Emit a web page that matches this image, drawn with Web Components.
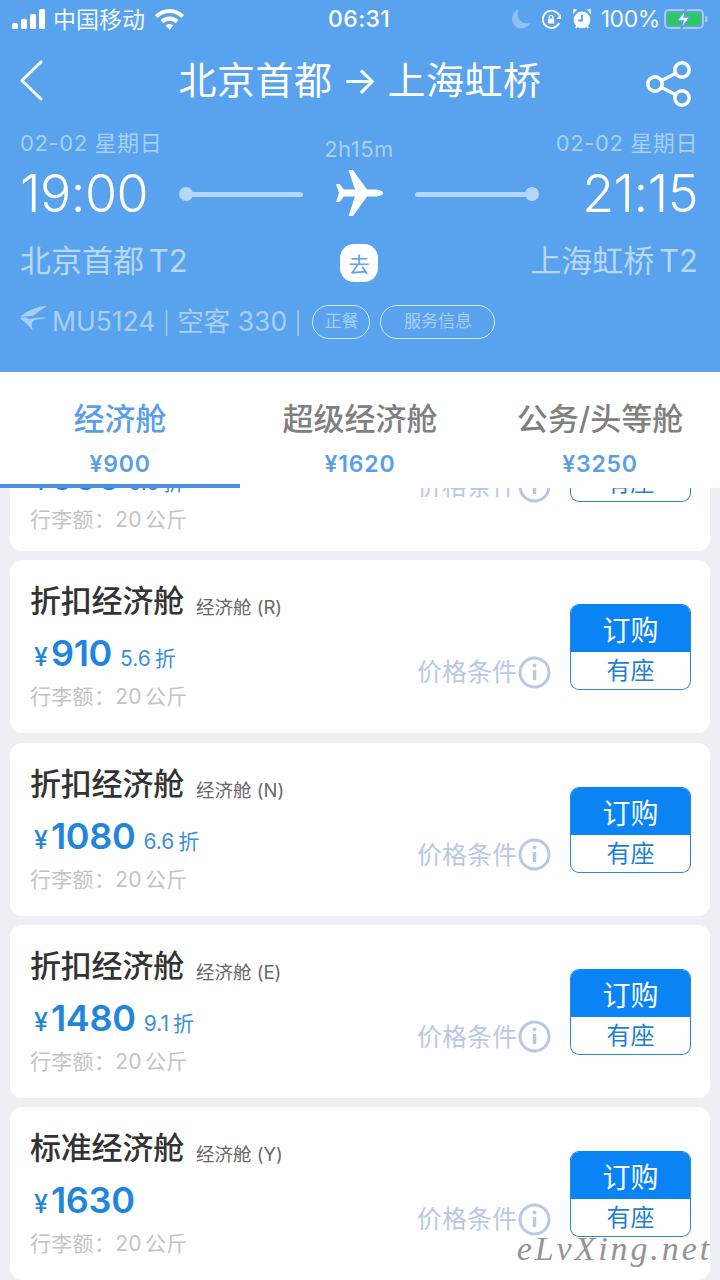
<!DOCTYPE html>
<html lang="zh">
<head>
<meta charset="utf-8">
<title>航班详情</title>
<style>
    html, body { margin: 0; padding: 0; background: #eeeef5; }
    body { font-family: Inter, "Noto Sans CJK SC", sans-serif; }
</style>
</head>
<body>
<flight-page>
    <status-bar slot="status"></status-bar>
    <flight-header slot="header"></flight-header>
    <cabin-tabs slot="tabs">
        <cabin-tab active label="经济舱" price="¥900"></cabin-tab>
        <cabin-tab label="超级经济舱" price="¥1620"></cabin-tab>
        <cabin-tab label="公务/头等舱" price="¥3250"></cabin-tab>
    </cabin-tabs>
    <fare-card class="scrolled" name="折扣经济舱" cabin="经济舱 (R)" price="900" discount="5.5 折"></fare-card>
    <fare-card name="折扣经济舱" cabin="经济舱 (R)" price="910" discount="5.6 折"></fare-card>
    <fare-card name="折扣经济舱" cabin="经济舱 (N)" price="1080" discount="6.6 折"></fare-card>
    <fare-card name="折扣经济舱" cabin="经济舱 (E)" price="1480" discount="9.1 折"></fare-card>
    <fare-card name="标准经济舱" cabin="经济舱 (Y)" price="1630"></fare-card>
</flight-page>

<script>
class FlightPage extends HTMLElement {
    constructor() {
        super();
        this.attachShadow({ mode: 'open' });
        this.shadowRoot.innerHTML = `
            <style>
                :host {
                    display: flex;
                    flex-direction: column;
                    position: relative;
                    width: 720px;
                    height: 1280px;
                    overflow: hidden;
                    background: #eeeef5;
                }
                #top {
                    background: #58a2ee;
                    height: 372px;
                    flex: none;
                }
                #list {
                    flex: 1;
                    min-height: 0;
                    overflow: hidden;
                    display: flex;
                    flex-direction: column;
                    gap: 9.3px;
                    padding: 0 10px;
                }
                #mark {
                    position: absolute;
                    right: 8px;
                    bottom: 12px;
                    font: italic 34px "Liberation Serif", serif;
                    letter-spacing: 2.900px;
                    color: #949494;
                }
            </style>
            <div id="top">
                <slot name="status"></slot>
                <slot name="header"></slot>
            </div>
            <slot name="tabs"></slot>
            <div id="list"><slot></slot></div>
            <div id="mark">eLvXing.net</div>
        `;
    }
}

class StatusBar extends HTMLElement {
    constructor() {
        super();
        this.attachShadow({ mode: 'open' });
        this.shadowRoot.innerHTML = `
            <style>
                :host {
                    display: flex;
                    align-items: center;
                    height: 38px;
                    padding: 0 12px 0 12px;
                    color: #fff;
                    font-family: Inter, "Noto Sans CJK SC", sans-serif;
                    position: relative;
                }
                svg { display: block; flex: none; }
                #carrier { font-size: 23px; margin: 0 0 3px 8px; opacity: .92; }
                #wifi { margin-left: 10px; }
                #time {
                    position: absolute;
                    left: 328px;
                    font-size: 23px;
                    font-weight: 500;
                    letter-spacing: .4px;
                }
                #right { margin-left: auto; display: flex; align-items: center; }
                #pct { font-size: 23px; margin: 0 4px 0 9px; letter-spacing: -.4px; opacity: .95; }
            </style>
            <svg width="33" height="20" viewBox="0 0 33 20" fill="#fff">
                <rect x="0" y="14" width="6" height="6" rx="1.500"/>
                <rect x="9" y="10" width="6" height="10" rx="1.500"/>
                <rect x="18" y="5" width="6" height="15" rx="1.500"/>
                <rect x="27" y="0" width="6" height="20" rx="1.500"/>
            </svg>
            <span id="carrier">中国移动</span>
            <svg id="wifi" width="29" height="21" viewBox="0 0 29 21" fill="#fff">
                <path d="M14.500 0C9 0 4 2.200 0 6l2.700 3C5.900 5.900 10 4.100 14.500 4.100S23.100 5.900 26.300 9L29 6C25 2.200 20 0 14.500 0z"/>
                <path d="M14.500 7.600c-3.400 0-6.500 1.300-8.900 3.600l2.800 3c1.600-1.500 3.700-2.400 6.100-2.400s4.500.9 6.100 2.400l2.800-3c-2.400-2.300-5.500-3.600-8.900-3.600z"/>
                <path d="M14.500 15c-1.500 0-2.800.6-3.800 1.500l3.800 4.500 3.800-4.500c-1-.9-2.300-1.500-3.800-1.500z"/>
            </svg>
            <span id="time">06:31</span>
            <div id="right">
                <svg width="18" height="20" viewBox="0 0 19 20" fill="#8fc0f4">
                    <path d="M7 0C2.800 1.200 0 5 0 9.500 0 15.300 4.500 20 10 20c3.900 0 7.300-2.400 9-5.800-1 .4-2.200.6-3.400.6C10.400 14.800 6 10.400 6 5c0-1.800.4-3.500 1-5z"/>
                </svg>
                <svg style="margin-left:11px" width="21" height="21" viewBox="0 0 23 23" fill="none" stroke="#fff" stroke-width="2">
                    <path d="M20 15.500A9.500 9.500 0 1 1 20 7"/>
                    <path d="M21.800 5.500v5.500h-5z" fill="#fff" stroke="none"/>
                    <rect x="7.500" y="10.500" width="7" height="5.500" rx="1" fill="#fff" stroke="none"/>
                    <path d="M9 10.500V9a2 2 0 0 1 4 0v1.500" stroke-width="1.500"/>
                </svg>
                <svg style="margin-left:10px" width="20" height="22" viewBox="0 0 21 23">
                    <circle cx="10.500" cy="12.500" r="8.800" fill="#fff"/>
                    <path d="M10.500 7v6H6.500" fill="none" stroke="#58a2ee" stroke-width="2"/>
                    <path d="M1 6.500 5.500 1.500 1.500 1zM20 6.500 15.500 1.500 19.500 1z" fill="#fff"/>
                    <path d="M4 21l2-3M17 21l-2-3" stroke="#fff" stroke-width="2"/>
                </svg>
                <span id="pct">100%</span>
                <svg width="44" height="22" viewBox="0 0 44 22">
                    <rect x="1" y="2" width="38" height="18" rx="4" fill="none" stroke="#a5cbf5" stroke-width="2"/>
                    <rect x="3.500" y="4.500" width="33" height="13" rx="2" fill="#2ec95c"/>
                    <rect x="41" y="8" width="2.500" height="6" rx="1" fill="#a5cbf5"/>
                    <path d="M22 1 13 13h6l-2 8 9-12h-6z" fill="#fff" stroke="#58a2ee" stroke-width="1.500"/>
                </svg>
            </div>
        `;
    }
}

class FlightHeader extends HTMLElement {
    constructor() {
        super();
        this.attachShadow({ mode: 'open' });
        this.shadowRoot.innerHTML = `
            <style>
                :host {
                    display: block;
                    color: #fff;
                    font-family: Inter, "Noto Sans CJK SC", sans-serif;
                }
                svg { display: block; flex: none; }
                #nav {
                    display: grid;
                    grid-template-columns: 1fr auto 1fr;
                    align-items: center;
                    height: 84px;
                    padding: 0 28px;
                }
                #back { margin-left: -10px; }
                #share { justify-self: end; margin-top: 8px; }
                #title {
                    font-size: 38px;
                    line-height: 84px;
                    letter-spacing: .5px;
                    word-spacing: -2px;
                    white-space: nowrap;
                }
                #schedule {
                    display: grid;
                    grid-template-columns: minmax(0, 1fr) 340px minmax(0, 1fr);
                    padding: 6px 22px 0 20px;
                    height: 128px;
                }
                .side { display: flex; flex-direction: column; white-space: nowrap; }
                .side.arr { align-items: flex-end; }
                .date { font-size: 22px; line-height: 30px; color: #a9cff6; letter-spacing: .6px; }
                .clock { font-size: 52px; font-weight: 350; line-height: 68px; margin-top: 2px; letter-spacing: -.5px; }
                .airport { font-size: 31px; line-height: 44px; margin-top: 11px; color: #b9d8f8; white-space: nowrap; word-spacing: -4px; }
                #middle { display: flex; flex-direction: column; align-items: center; }
                #duration { font-size: 22px; line-height: 26px; margin-top: 8px; color: #a9cff6; letter-spacing: .5px; }
                #track { display: flex; align-items: center; gap: 32px; height: 50px; margin-top: 7px; flex: none; }
                #track svg { margin-top: -2px; }
                .line { display: flex; align-items: center; width: 121px; }
                .line i { display: block; flex: 1; height: 5px; border-radius: 3px; background: #b6d6f8; }
                .line b { display: block; width: 14px; height: 14px; border-radius: 50%; background: #b6d6f8; margin: 0 -3px; flex: none; }
                #dir {
                    width: 38px;
                    height: 38px;
                    border-radius: 14px;
                    background: #fff;
                    color: #58a2ee;
                    font-size: 21px;
                    display: flex;
                    align-items: center;
                    justify-content: center;
                    margin-top: 25px;
                    flex: none;
                }
                #info {
                    display: flex;
                    align-items: center;
                    padding: 0 20px;
                    height: 34px;
                    margin-top: 49px;
                    color: #a9cff6;
                    font-size: 26.500px;
                    white-space: nowrap;
                }
                #info svg { margin-top: -8px; }
                #info span.no { margin: 0 0 6px 4px; }
                #info span.sep { font-size: 22px; font-weight: 300; }
                .chip {
                    box-sizing: border-box;
                    height: 34px;
                    border: 1.500px solid #d6e8fb;
                    border-radius: 17px;
                    font-size: 17px;
                    line-height: 30px;
                    color: #a9cff6;
                    text-align: center;
                }
                #meal { width: 58px; margin-left: 11px; }
                #service { width: 115px; margin-left: 10px; }
            </style>
            <div id="nav">
                <svg id="back" width="26" height="44" viewBox="0 0 26 44" fill="none" stroke="#fff" stroke-width="3" stroke-linecap="round" stroke-linejoin="round">
                    <path d="M23 4 4 22.500 23 41"/>
                </svg>
                <span id="title">北京首都 → 上海虹桥</span>
                <svg id="share" width="46" height="46" viewBox="0 0 46 46" fill="none" stroke="#fff" stroke-width="3.500">
                    <circle cx="9" cy="23" r="7.200"/>
                    <circle cx="36" cy="9" r="7.200"/>
                    <circle cx="36" cy="37" r="7.200"/>
                    <path d="M15.500 19.500 29.500 12.500M15.500 26.500l14 7"/>
                </svg>
            </div>
            <div id="schedule">
                <div class="side">
                    <span class="date">02-02 星期日</span>
                    <span class="clock">19:00</span>
                    <span class="airport">北京首都 T2</span>
                </div>
                <div id="middle">
                    <span id="duration">2h15m</span>
                    <div id="track">
                        <div class="line"><b></b><i></i></div>
                        <svg width="48" height="46" viewBox="0 0 48 46" fill="#fff">
                            <path d="M48 23c0-2-4-3.500-8-3.500h-8L18 0h-4.500L20 19.500H9L4.500 14H1l3 9-3 9h3.500L9 26.500h11L13.500 46H18l14-19.500h8c4 0 8-1.500 8-3.500z"/>
                        </svg>
                        <div class="line"><i></i><b></b></div>
                    </div>
                    <div id="dir">去</div>
                </div>
                <div class="side arr">
                    <span class="date">02-02 星期日</span>
                    <span class="clock">21:15</span>
                    <span class="airport">上海虹桥 T2</span>
                </div>
            </div>
            <div id="info">
                <svg width="28" height="26" viewBox="0 0 28 26" fill="#a9cff6">
                    <path d="M27 1C18 1 8 5 0 12c6-1 10-1 13-1C17 8 22 4 27 1z"/>
                    <path d="M27 13c-7-1-13 0-18 1-3-2-6-2-9-1 4 3 7 7 13 12-2-4-2-8 2-10 4-1 8-1 12-2z"/>
                </svg>
                <span class="no">MU5124 <span class="sep">|</span> 空客 330 <span class="sep">|</span></span>
                <span class="chip" id="meal">正餐</span>
                <span class="chip" id="service">服务信息</span>
            </div>
        `;
    }
}

class CabinTabs extends HTMLElement {
    constructor() {
        super();
        this.attachShadow({ mode: 'open' });
        this.shadowRoot.innerHTML = `
            <style>
                :host {
                    display: grid;
                    grid-template-columns: repeat(3, 240px);
                    height: 116px;
                    flex: none;
                    background: #fff;
                    position: relative;
                    z-index: 2;
                }
            </style>
            <slot></slot>
        `;
    }
}

class CabinTab extends HTMLElement {
    constructor() {
        super();
        this.attachShadow({ mode: 'open' });
        this.shadowRoot.innerHTML = `
            <style>
                :host {
                    display: flex;
                    flex-direction: column;
                    align-items: center;
                    box-sizing: border-box;
                    height: 116px;
                    padding-top: 25px;
                    font-family: Inter, "Noto Sans CJK SC", sans-serif;
                    border-bottom: 4px solid transparent;
                }
                :host([active]) { border-bottom-color: #4f8fdf; }
                #label { font-size: 31px; line-height: 44px; font-weight: 500; color: #808080; white-space: nowrap; }
                :host([active]) #label { color: #5a9fe6; }
                #price { font-size: 23px; line-height: 30px; margin-top: 8px; font-weight: 600; color: #5a9fe6; letter-spacing: .8px; }
            </style>
            <span id="label"></span>
            <span id="price"></span>
        `;
    }

    connectedCallback() {
        this.shadowRoot.querySelector('#label').textContent = this.getAttribute('label');
        this.shadowRoot.querySelector('#price').textContent = this.getAttribute('price');
    }
}

class FareCard extends HTMLElement {
    constructor() {
        super();
        this.attachShadow({ mode: 'open' });
        this.shadowRoot.innerHTML = `
            <style>
                :host {
                    display: flex;
                    flex: none;
                    box-sizing: border-box;
                    height: 173px;
                    padding: 0 19px 0 20px;
                    background: #fff;
                    border-radius: 12px;
                    font-family: Inter, "Noto Sans CJK SC", sans-serif;
                }
                /* first card is scrolled under the tabs, only its bottom shows */
                :host(.scrolled) { margin-top: -110px; }
                :host(.scrolled) #head, :host(.scrolled) #order { visibility: hidden; }
                :host(.scrolled) #fare { margin-top: 11px; }
                :host(.scrolled) #bag { margin-top: 3px; }
                :host(.scrolled) #terms { margin-top: 90px; }
                :host(.scrolled) #buy { margin-top: 38px; }
                #main { flex: 1; display: flex; flex-direction: column; padding-top: 19px; }
                #head { display: flex; height: 44px; }
                #name { font-size: 31px; line-height: 44px; color: #333; font-weight: 500; letter-spacing: -.2px; }
                #cabin { font-size: 18.500px; line-height: 44px; margin-top: 6px; color: #666; margin-left: 12px; }
                #fare { display: flex; align-items: baseline; height: 50px; margin-top: 5px; color: #2185dc; padding-left: 4px; }
                #yen { font-size: 25px; font-weight: 500; margin-right: 3px; }
                #price { font-size: 36px; font-weight: 600; line-height: 50px; letter-spacing: -.3px; }
                #discount { font-size: 21px; margin-left: 8px; color: #3d8fdc; word-spacing: -2px; }
                #bag { font-size: 21px; line-height: 30px; margin-top: 4px; color: #c4c4c4; letter-spacing: .3px; word-spacing: -3px; }
                #terms {
                    display: flex;
                    align-items: center;
                    gap: 1px;
                    align-self: flex-start;
                    margin-top: 94px;
                    margin-right: 19px;
                    font-size: 25px;
                    line-height: 36px;
                    color: #b9c8e6;
                }
                #terms svg { display: block; }
                #buy {
                    box-sizing: border-box;
                    width: 121px;
                    height: 86px;
                    margin-top: 44px;
                    border: 1.500px solid #2f86d8;
                    border-top-color: #0a84f5;
                    border-radius: 9px;
                    overflow: hidden;
                    text-align: center;
                    flex: none;
                }
                #order { height: 47px; background: #0a84f5; color: #fff; font-size: 28px; line-height: 53px; }
                #seat { font-size: 24px; line-height: 37px; color: #1f7fd0; }
            </style>
            <div id="main">
                <div id="head"><span id="name"></span><span id="cabin"></span></div>
                <div id="fare"><span id="yen">¥</span><span id="price"></span><span id="discount"></span></div>
                <div id="bag">行李额：20 公斤</div>
            </div>
            <div id="terms">
                <span>价格条件</span>
                <svg width="33" height="33" viewBox="0 0 33 33" fill="none" stroke="#b9c8e6" stroke-width="3">
                    <circle cx="16.500" cy="16.500" r="14.500"/>
                    <path d="M16.500 14v10" stroke-width="3.500"/>
                    <circle cx="16.500" cy="9.500" r="2" fill="#b9c8e6" stroke="none"/>
                </svg>
            </div>
            <div id="buy">
                <div id="order">订购</div>
                <div id="seat">有座</div>
            </div>
        `;
    }

    connectedCallback() {
        const root = this.shadowRoot;
        root.querySelector('#name').textContent = this.getAttribute('name');
        root.querySelector('#cabin').textContent = this.getAttribute('cabin');
        root.querySelector('#price').textContent = this.getAttribute('price');
        root.querySelector('#discount').textContent = this.getAttribute('discount') || '';
    }
}

customElements.define('flight-page', FlightPage);
customElements.define('status-bar', StatusBar);
customElements.define('flight-header', FlightHeader);
customElements.define('cabin-tabs', CabinTabs);
customElements.define('cabin-tab', CabinTab);
customElements.define('fare-card', FareCard);
</script>
</body>
</html>
